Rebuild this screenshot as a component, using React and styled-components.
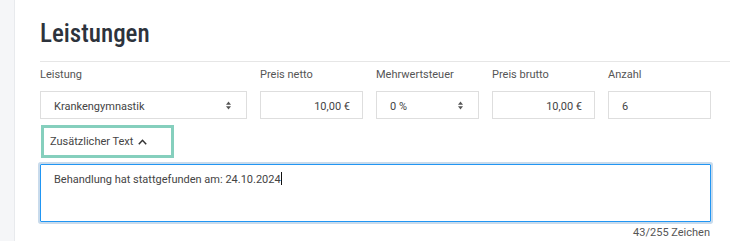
import React from "react";
import styled, { createGlobalStyle } from "styled-components";

const Global = createGlobalStyle`
  html, body { margin: 0; padding: 0; background: #fff; }
  body { font-family: Roboto, "Noto Sans", Arial, sans-serif; color: #444; }
`;

const Page = styled.div`
  display: flex;
  min-height: 241px;
`;

const Sidebar = styled.aside`
  width: 14px;
  flex: none;
  background: #f5f6f8;
  border-right: 1px solid #e8eaed;
`;

const Main = styled.main`
  flex: 1;
  padding: 18px 15px 0 25px;
`;

const Header = styled.div`
  border-bottom: 1px solid #e6e6e6;
  padding-bottom: 12px;
`;

const Title = styled.h1`
  margin: 0;
  font-size: 25px;
  line-height: 31px;
  font-weight: 500;
  font-stretch: 86%;
  color: #2d333c;
`;

const Body = styled.div`
  padding-top: 5px;
  width: 671px;
`;

const FieldRow = styled.div`
  display: grid;
  grid-template-columns: 207px repeat(4, 103px);
  column-gap: 13px;
`;

const Field = styled.div`
  display: flex;
  flex-direction: column;
  gap: 8px;
`;

const Label = styled.label`
  font-size: 11px;
  line-height: 16px;
  color: #555;
`;

const Box = styled.div`
  height: 28px;
  box-sizing: border-box;
  border: 1px solid #dedede;
  display: flex;
  align-items: center;
  justify-content: ${(p) => (p.$right ? "flex-end" : "space-between")};
  padding: 2px ${(p) => (p.$right ? "12px" : "15px")} 0 13px;
  font-size: 11px;
  color: #444;
  background: #fff;
`;

const Arrows = styled.svg`
  width: 5px;
  height: 9px;
  flex: none;
  margin-top: -2px;
`;

const ToggleButton = styled.button`
  margin: 6px 0 0 1px;
  height: 33px;
  width: 133px;
  box-sizing: border-box;
  border: 3px solid #85cfbd;
  background: #fff;
  display: flex;
  align-items: center;
  gap: 5px;
  padding: 0 0 0 6px;
  font-family: inherit;
  font-size: 11px;
  color: #444;
`;

const TextArea = styled.div`
  margin-top: 6px;
  height: 58px;
  box-sizing: border-box;
  border: 1px solid #2196f3;
  box-shadow: 0 0 0 2px #c9dbec;
  border-radius: 1px;
  padding: 6px 13px;
  font-size: 11px;
  line-height: 17px;
  color: #444;
`;

const Caret = styled.span`
  display: inline-block;
  width: 1px;
  height: 13px;
  background: #111;
  vertical-align: -2px;
`;

const Counter = styled.div`
  text-align: right;
  font-size: 11px;
  line-height: 14px;
  color: #555;
  margin-top: 4px;
  padding-right: 1px;
`;

const SelectArrows = () => (
  <Arrows viewBox="0 0 5 9">
    <path d="M2.5 0.5 L5 3.7 H0 Z" fill="#555" />
    <path d="M2.5 8.5 L5 5.3 H0 Z" fill="#555" />
  </Arrows>
);

const Chevron = () => (
  <svg width="9" height="6" viewBox="0 0 9 6">
    <path d="M0.8 5.2 L4.5 1.3 L8.2 5.2" fill="none" stroke="#333" strokeWidth="1.5" />
  </svg>
);

export default function App() {
  return (
    <>
      <Global />
      <Page>
        <Sidebar />
        <Main>
          <Header>
            <Title>Leistungen</Title>
          </Header>
          <Body>
            <FieldRow>
              <Field>
                <Label>Leistung</Label>
                <Box>
                  <span>Krankengymnastik</span>
                  <SelectArrows />
                </Box>
              </Field>
              <Field>
                <Label>Preis netto</Label>
                <Box $right>10,00 €</Box>
              </Field>
              <Field>
                <Label>Mehrwertsteuer</Label>
                <Box>
                  <span>0 %</span>
                  <SelectArrows />
                </Box>
              </Field>
              <Field>
                <Label>Preis brutto</Label>
                <Box $right>10,00 €</Box>
              </Field>
              <Field>
                <Label>Anzahl</Label>
                <Box>6</Box>
              </Field>
            </FieldRow>
            <ToggleButton>
              Zusätzlicher Text <Chevron />
            </ToggleButton>
            <TextArea>
              Behandlung hat stattgefunden am: 24.10.2024<Caret />
            </TextArea>
            <Counter>43/255 Zeichen</Counter>
          </Body>
        </Main>
      </Page>
    </>
  );
}
